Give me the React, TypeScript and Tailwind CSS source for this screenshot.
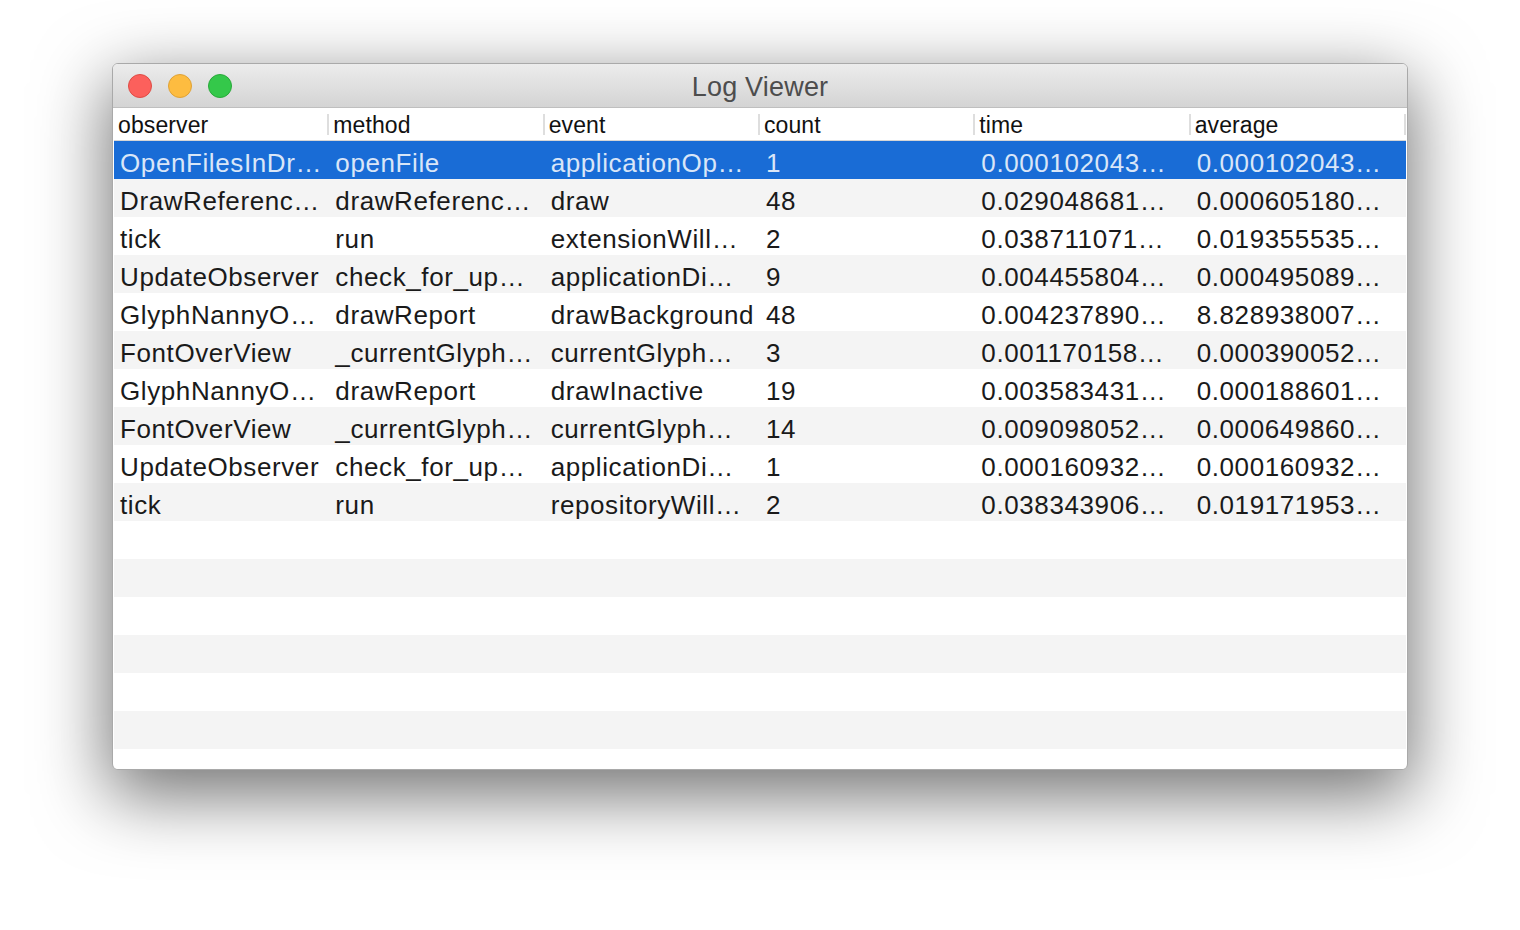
const columns = ["observer", "method", "event", "count", "time", "average"];

const rows = [
  ["OpenFilesInDr…", "openFile", "applicationOp…", "1", "0.000102043…", "0.000102043…"],
  ["DrawReferenc…", "drawReferenc…", "draw", "48", "0.029048681…", "0.000605180…"],
  ["tick", "run", "extensionWill…", "2", "0.038711071…", "0.019355535…"],
  ["UpdateObserver", "check_for_up…", "applicationDi…", "9", "0.004455804…", "0.000495089…"],
  ["GlyphNannyO…", "drawReport", "drawBackground", "48", "0.004237890…", "8.828938007…"],
  ["FontOverView", "_currentGlyph…", "currentGlyph…", "3", "0.001170158…", "0.000390052…"],
  ["GlyphNannyO…", "drawReport", "drawInactive", "19", "0.003583431…", "0.000188601…"],
  ["FontOverView", "_currentGlyph…", "currentGlyph…", "14", "0.009098052…", "0.000649860…"],
  ["UpdateObserver", "check_for_up…", "applicationDi…", "1", "0.000160932…", "0.000160932…"],
  ["tick", "run", "repositoryWill…", "2", "0.038343906…", "0.019171953…"],
];

// empty rows that keep the zebra striping going below the data
const fillerCount = 7;

function TrafficLights() {
  return (
    <div className="flex items-center gap-4 pl-[15px]">
      <span className="h-6 w-6 rounded-full border border-[#de4c45] bg-[#fc605c]" />
      <span className="h-6 w-6 rounded-full border border-[#dfa236] bg-[#fdbc40]" />
      <span className="h-6 w-6 rounded-full border border-[#29a93a] bg-[#34c84a]" />
    </div>
  );
}

export default function App() {
  const selected = 0;
  const total = rows.length + fillerCount;

  return (
    <div
      className="min-h-[930px] bg-white pt-[63px]"
      style={{ fontFamily: '"Liberation Sans", Arial, sans-serif' }}
    >
      <div className="mx-auto flex h-[707px] w-[1296px] flex-col overflow-hidden rounded-[6px] border border-[#a9a9a9] bg-white shadow-[0_22px_70px_4px_rgba(0,0,0,0.55)]">
        <div className="grid h-[44px] shrink-0 grid-cols-[1fr_auto_1fr] items-center border-b border-[#bfbfbf] bg-gradient-to-b from-[#ececec] to-[#d4d4d4]">
          <TrafficLights />
          <div className="pt-[4px] text-[27px] leading-none tracking-[0.2px] text-[#4d4d4d]">Log Viewer</div>
          <div />
        </div>

        <div className="flex flex-1 flex-col overflow-hidden px-px">
          <div className="grid h-[33px] shrink-0 grid-cols-6 border-b border-[#d6d6d6] bg-white">
            {columns.map((col) => (
              <div key={col} className="flex items-center justify-between pl-1">
                <span className="pt-[2px] text-[23px] leading-none tracking-[0.1px] text-[#111]">{col}</span>
                <span className="h-[21px] w-[2px] bg-[#dedede]" />
              </div>
            ))}
          </div>

          <div className="flex-1 overflow-hidden">
            {Array.from({ length: total }).map((_, i) => {
              const data = rows[i];
              const isSelected = i === selected;
              const bg = isSelected ? "bg-[#196cd6]" : i % 2 === 1 ? "bg-[#f4f4f4]" : "bg-white";
              return (
                <div key={i} className={`grid h-[38px] grid-cols-6 ${bg}`}>
                  {data
                    ? data.map((cell, j) => (
                        <div
                          key={j}
                          className={`flex items-center overflow-hidden whitespace-nowrap pl-[6px] pt-[5px] text-[26px] leading-none tracking-[0.6px] ${
                            isSelected ? "text-[#d9e6f8]" : "text-[#1a1a1a]"
                          }`}
                        >
                          {cell}
                        </div>
                      ))
                    : null}
                </div>
              );
            })}
          </div>
        </div>
      </div>
    </div>
  );
}
